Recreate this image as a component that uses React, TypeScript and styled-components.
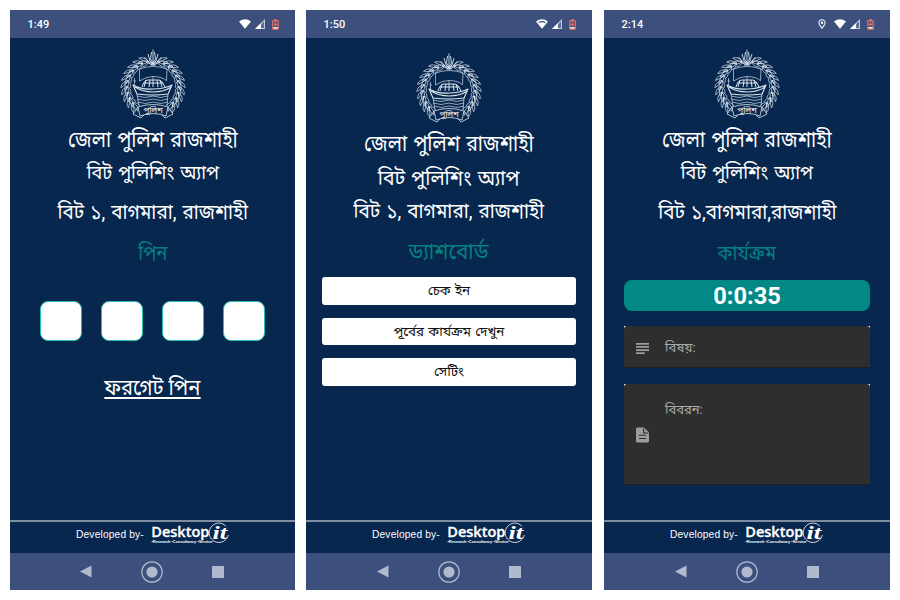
import React from "react";
import styled, { createGlobalStyle } from "styled-components";

const GlobalStyle = createGlobalStyle`
  body { margin: 0; background: #fff; font-family: Roboto, "Noto Sans Bengali", "Noto Sans", sans-serif; }
  * { box-sizing: border-box; }
`;

const Gallery = styled.main`
  width: 900px; height: 600px; padding: 10px;
  display: grid; grid-template-columns: 296px 298px 286px; overflow: hidden;
`;
const Phone = styled.section<{ $width: number }>`
  width: ${p => p.$width}px; height: 580px; display: flex; flex-direction: column;
  background: #07274f; overflow: hidden;
`;
const StatusBar = styled.header`
  height: 28px; flex: none; background: #3d507d; color: #fff;
  display: flex; align-items: center; justify-content: space-between;
  padding: 0 16.5px 0 17.5px;
`;
const Clock = styled.time`
  font: 500 11px/29px Roboto, sans-serif; letter-spacing: 0;
`;
const StatusIcons = styled.div`display: flex; align-items: center;`;
const Screen = styled.div<{ $top: number }>`
  flex: 1; padding-top: ${p => p.$top}px;
  display: flex; flex-direction: column; align-items: center;
`;
const Line = styled.div<{ $size: number; $height: number; $condense?: number; $accent?: boolean }>`
  flex: none; height: ${p => p.$height}px; line-height: ${p => p.$height}px;
  font-size: ${p => p.$size}px; white-space: nowrap; word-spacing: 1.5px;
  transform: scaleX(${p => p.$condense ?? 1});
  color: ${p => (p.$accent ? "#06807f" : "#fff")};
`;
const PinRow = styled.div`
  margin-top: 34px; display: grid; grid-template-columns: repeat(4, 42px); column-gap: 19.3px;
`;
const PinBox = styled.div`
  height: 40px; background: #fff; border: 1px solid #27bdb5; border-radius: 8px;
`;
const ForgotLink = styled.a`
  margin-top: 30.5px; height: 27px; line-height: 31px; font-size: 21.5px;
  color: #fff; border-bottom: 2px solid #fff; white-space: nowrap; transform: scaleX(0.935);
`;
const Menu = styled.nav`
  width: 254px; margin-top: 4px; display: flex; flex-direction: column; gap: 13px;
`;
const MenuButton = styled.button`
  height: 27.7px; padding: 0; border: 0; border-radius: 3px; background: #fff; color: #111;
  font: 13.4px/28px Roboto, "Noto Sans Bengali", sans-serif; word-spacing: 1px;
`;
const Timer = styled.div`
  width: 246px; height: 31px; margin-top: 13px; border-radius: 8px; background: #028885;
  color: #fff; font: 700 23.6px/33px Roboto, sans-serif; text-align: center;
`;
const FieldFrame = styled.div<{ $height: number; $gap: number }>`
  width: 246px; height: ${p => p.$height}px; margin-top: ${p => p.$gap}px;
  background: linear-gradient(#fff 0 4px, #2e2e2e 4px);
`;
const Field = styled.label<{ $tall?: boolean }>`
  height: 100%; display: grid; grid-template-columns: 41px 1fr;
  background: #2e2e2e; border-bottom: 1px solid #1b1e24; border-radius: 3px 3px 0 0;
  color: #a9a9a9; font-size: 13px; line-height: ${p => (p.$tall ? 52 : 43)}px;
`;
const FieldIcon = styled.span`
  display: flex; align-items: center; padding: 1px 0 0 11px; color: #9c9c9c;
`;
const Footer = styled.footer`
  height: 33px; flex: none; border-top: 2px solid #7f8da0;
  display: flex; align-items: flex-start; padding-left: 66px; color: #fff;
`;
const Credit = styled.span`
  width: 75px; font: 10.2px/26px "Liberation Sans", sans-serif; letter-spacing: 0.17px; white-space: nowrap;
`;
const NavBar = styled.nav`
  height: 37px; flex: none; background: #3d507d; padding-right: 1px;
  display: flex; align-items: center; justify-content: center; gap: 49px;
`;

const Wifi = ({ weak }: { weak?: boolean }) => (
  <svg width="12" height="10" viewBox="0 0 12 10">
    <path d="M0 2.6Q6-2.2 12 2.6L6 9.8Z" fill="#fff" />
    {weak && <path d="M2.3 3Q6 .8 9.7 3L8.9 4Q6 2.4 3.1 4Z" fill="#3d507d" />}
  </svg>
);
const Signal = () => (
  <svg width="10" height="10" viewBox="0 0 10 10">
    <path d="M10 0V10H0Z" fill="#c3cadb" />
    <path d="M9 2.6V9H6V5.6Z" fill="#5d6d94" />
    <path d="M5.8 4.2V10H0Z" fill="#fff" />
  </svg>
);
const Battery = () => (
  <svg width="7" height="11" viewBox="0 0 7 11">
    <path d="M.8 1.8H6.2V10.2H.8Z" fill="none" stroke="#e8705f" strokeWidth="1.2" />
    <path d="M2 .2H5V1.8H2ZM1.8 4.8H5.2V5.9H1.8ZM3 3.6H4V7H3Z" fill="#e8705f" />
    <path d="M1.4 8H5.6V9.7H1.4Z" fill="#f5e6e6" />
  </svg>
);
const Pin = () => (
  <svg width="8" height="10" viewBox="0 0 8 10">
    <path d="M4 9.3C2.6 7.3.9 5.7.9 3.8a3.1 3.1 0 0 1 6.2 0C7.1 5.7 5.4 7.3 4 9.3Z" fill="none" stroke="#e8ebf2" strokeWidth="1.1" />
    <circle cx="4" cy="3.8" r="1.2" fill="#fff" />
  </svg>
);
const IconSlot = styled.span<{ $gap: number }>`
  display: flex; margin-left: ${p => p.$gap}px;
`;

const leafAngles = [20, 33, 46, 59, 72, 85, 98, 111, 124, 137];
const Wreath = () => (
  <g>
    {leafAngles.map(a => (
      <path
        key={a}
        transform={`translate(33 38) rotate(${-a}) translate(0 -28)`}
        d="M4.5 2.5Q0 1.5-3.5-4Q2-4 4.5 2.5M4.5 2.5Q-2 5-5.5 0Q0-1 4.5 2.5M4.5 2.5Q1 6.5-3 5.5"
      />
    ))}
  </g>
);
const Emblem = () => (
  <svg width="66" height="70" viewBox="0 0 66 70" fill="none" stroke="#dbe5ed" strokeWidth=".65" strokeLinejoin="round">
    <Wreath />
    <g transform="translate(66 0) scale(-1 1)"><Wreath /></g>
    <path d="M33 .5V15M31.5 3L30.5 10L33 14L35.5 10L34.5 3M28 5L30 12L33 15M38 5L36 12L33 15M24.5 8L29 13L33 15M41.5 8L37 13L33 15M26 13L33 16L40 13M30 16H36" strokeWidth=".9" />
    <path d="M19.5 20Q33 15 47 20L46.5 31M19.5 20V32M19.5 32Q26 27.5 33 27.5Q42 27.5 47 32M33 27.5V31M14.5 29V37M13.5 32H16" />
    <path d="M22 38Q24 31 28 31H39Q43 32 45 38M26 31L24 38M30 31L29 38M33 31V38M37 31L38 38M40 31L42 38M24 34H43" strokeWidth="1" />
    <path d="M13 36Q22 41 33 40Q44 40 52 36L48 45Q33 47 17 45ZM15 38Q23 43 33 43Q44 43 51 38" strokeWidth="1.1" />
    <path d="M17 45L19 57M48 45L47 57M17 47Q25 50 33 47Q41 50 48 47M17 50Q25 53 33 50Q41 53 48 50M18 53Q25 56 33 53Q41 56 48 53" />
    <path d="M18 58Q33 53 48 58L46 67Q33 62 20 67ZM18 58L13 65L21 69L24 66M48 58L53 65L45 69L42 66" strokeWidth=".8" />
    <text x="33" y="63.5" textAnchor="middle" fill="#fff" stroke="none" fontSize="8">পুলিশ</text>
  </svg>
);
const DesktopItLogo = () => (
  <svg width="80" height="24" viewBox="0 0 80 24" fill="#fff">
    <text x=".3" y="14.8" fontFamily="Open Sans, sans-serif" fontSize="13.6" fontWeight="600" stroke="#fff" strokeWidth=".3" textLength="58" lengthAdjust="spacingAndGlyphs">Desktop</text>
    <path d="M75 4.2A9.7 9.7 0 1 0 77.3 13" fill="none" stroke="#fff" strokeWidth=".8" />
    <text x="61.5" y="16.5" fontFamily="Liberation Serif, serif" fontSize="19.5" fontStyle="italic" fontWeight="700" textLength="14.5" lengthAdjust="spacingAndGlyphs">it</text>
    <text x=".5" y="20.6" fontFamily="Liberation Sans, sans-serif" fontSize="3.8" fontWeight="700" textLength="61" lengthAdjust="spacingAndGlyphs">•Research •Consultancy •Service</text>
  </svg>
);
const SubjectIcon = () => (
  <svg width="15" height="13" viewBox="0 0 15 13" fill="currentColor">
    <path d="M1 1H14V2.7H1ZM1 4.1H14V5.8H1ZM1 7.2H14V8.9H1ZM1 10.3H9.7V12H1Z" />
  </svg>
);
const DocumentIcon = () => (
  <svg width="15" height="16" viewBox="0 0 15 16">
    <path d="M2.5.5H9L14 5.5V14Q14 15.5 12.5 15.5H2.5Q1 15.5 1 14V2Q1 .5 2.5.5Z" fill="#9c9c9c" />
    <path d="M8.6 1.4V6H13.2M4 8.3H11M4 11.5H11" fill="none" stroke="#2e2e2e" strokeWidth="1.1" />
  </svg>
);

function PhoneFrame({ time, location, weak, top, width = 286, children }: {
  time: string; location?: boolean; weak?: boolean; top: number; width?: number; children: React.ReactNode;
}) {
  return (
    <Phone $width={width}>
      <StatusBar>
        <Clock>{time}</Clock>
        <StatusIcons>
          {location && <IconSlot $gap={0}><Pin /></IconSlot>}
          <IconSlot $gap={8}><Wifi weak={weak} /></IconSlot>
          <IconSlot $gap={3.5}><Signal /></IconSlot>
          <IconSlot $gap={7}><Battery /></IconSlot>
        </StatusIcons>
      </StatusBar>
      <Screen $top={top}><Emblem />{children}</Screen>
      <Footer><Credit>Developed by-</Credit><DesktopItLogo /></Footer>
      <NavBar>
        <svg width="12" height="13" viewBox="0 0 12 13"><path d="M0 6.5L11.5 .5V12.5Z" fill="#b1b9cf" /></svg>
        <svg width="22" height="22" viewBox="0 0 22 22"><circle cx="11" cy="11" r="10.2" fill="none" stroke="#b1b9cf" strokeWidth="1.2" /><circle cx="11" cy="11" r="5.6" fill="#b1b9cf" /></svg>
        <svg width="12" height="12" viewBox="0 0 12 12"><rect width="12" height="12" rx=".6" fill="#b1b9cf" /></svg>
      </NavBar>
    </Phone>
  );
}

export default function App() {
  return (
    <>
      <GlobalStyle />
      <Gallery>
        <PhoneFrame time="1:49" top={11} width={285}>
          <Line $size={22} $height={42} $condense={0.885}>জেলা পুলিশ রাজশাহী</Line>
          <Line $size={19.7} $height={24} $condense={0.92}>বিট পুলিশিং অ্যাপ</Line>
          <Line $size={20} $height={54} $condense={0.945}>বিট ১, বাগমারা, রাজশাহী</Line>
          <Line $size={20} $height={28} $condense={0.92} $accent>পিন</Line>
          <PinRow><PinBox /><PinBox /><PinBox /><PinBox /></PinRow>
          <ForgotLink>ফরগেট পিন</ForgotLink>
        </PhoneFrame>
        <PhoneFrame time="1:50" top={15} weak>
          <Line $size={22} $height={42} $condense={0.885}>জেলা পুলিশ রাজশাহী</Line>
          <Line $size={21} $height={26} $condense={0.925}>বিট পুলিশিং অ্যাপ</Line>
          <Line $size={20} $height={40} $condense={0.945}>বিট ১, বাগমারা, রাজশাহী</Line>
          <Line $size={22} $height={42} $condense={0.94} $accent>ড্যাশবোর্ড</Line>
          <Menu>
            <MenuButton>চেক ইন</MenuButton>
            <MenuButton>পূর্বের কার্যক্রম দেখুন</MenuButton>
            <MenuButton>সেটিং</MenuButton>
          </Menu>
        </PhoneFrame>
        <PhoneFrame time="2:14" top={11} location>
          <Line $size={22} $height={42} $condense={0.885}>জেলা পুলিশ রাজশাহী</Line>
          <Line $size={19.7} $height={24} $condense={0.92}>বিট পুলিশিং অ্যাপ</Line>
          <Line $size={20} $height={54} $condense={0.945}>বিট ১,বাগমারা,রাজশাহী</Line>
          <Line $size={20} $height={28} $condense={0.92} $accent>কার্যক্রম</Line>
          <Timer>0:0:35</Timer>
          <FieldFrame $height={42} $gap={15}><Field><FieldIcon><SubjectIcon /></FieldIcon>বিষয়:</Field></FieldFrame>
          <FieldFrame $height={101} $gap={16}><Field $tall><FieldIcon><DocumentIcon /></FieldIcon>বিবরন:</Field></FieldFrame>
        </PhoneFrame>
      </Gallery>
    </>
  );
}
